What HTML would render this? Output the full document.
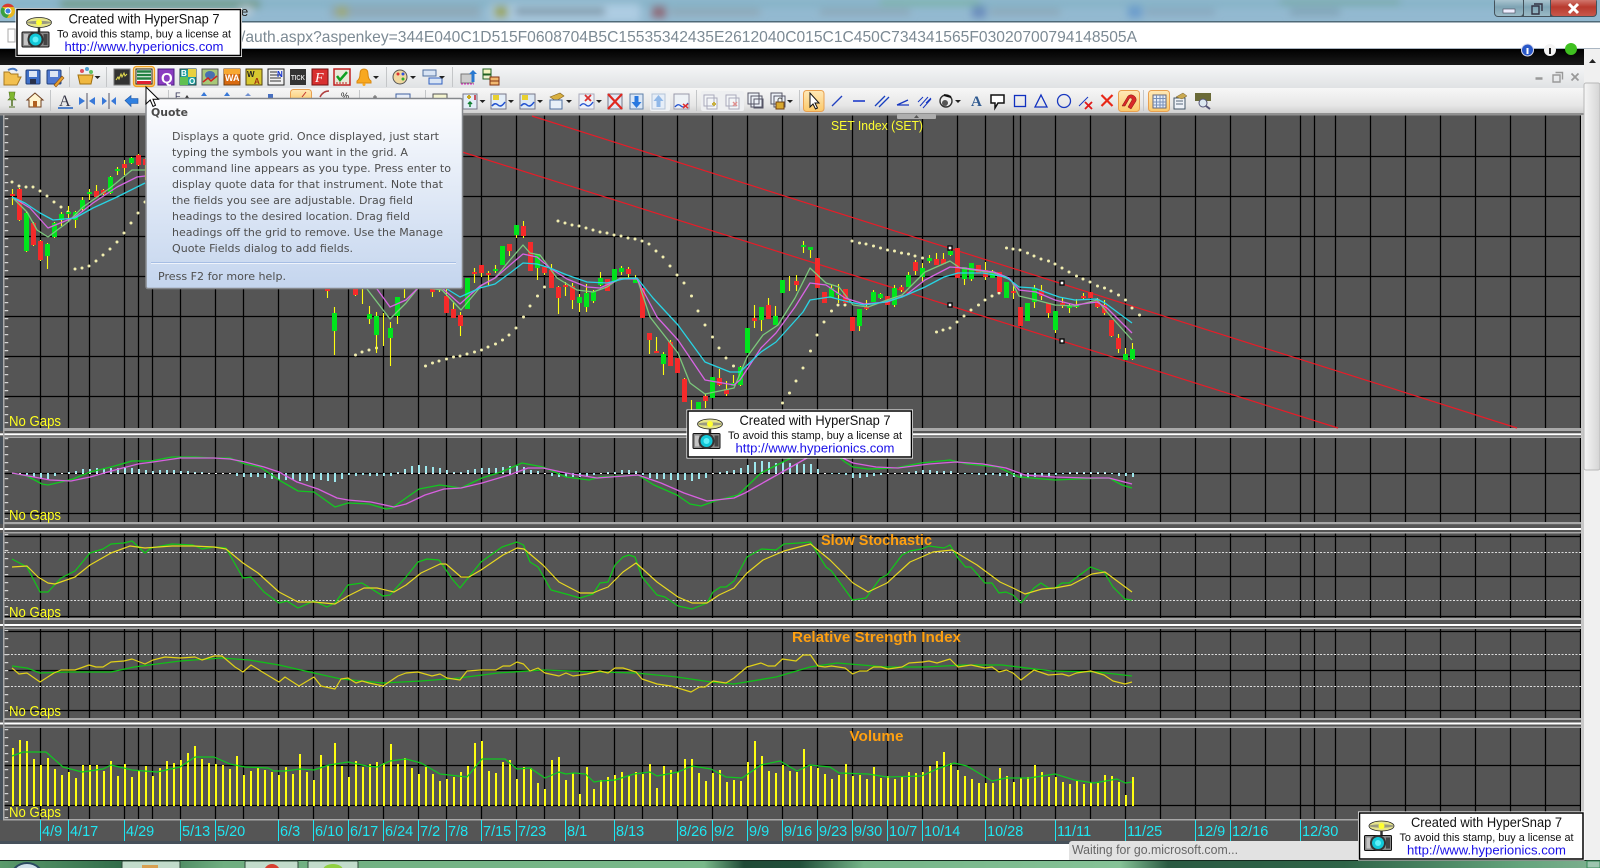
<!DOCTYPE html>
<html><head><meta charset="utf-8"><title>Chart</title>
<style>html,body{margin:0;padding:0;background:#fff;width:1600px;height:868px;overflow:hidden}svg{display:block}
.st{font-family:"Liberation Sans",sans-serif}
.tt{font-family:"DejaVu Sans","Liberation Sans",sans-serif;font-size:11px;fill:#4e4e4e}
.dt{font-family:"Liberation Sans",sans-serif;font-size:14.5px;fill:#1fe6f2}
.ng{font-family:"Liberation Sans",sans-serif;font-size:15px;fill:#ffff20}
.or{font-family:"Liberation Sans",sans-serif;font-size:15px;font-weight:bold;fill:#ffa010;text-anchor:middle}
.ln{fill:none;stroke-linejoin:round}
</style></head><body>
<svg width="1600" height="868" viewBox="0 0 1600 868" xmlns="http://www.w3.org/2000/svg">
<defs>
<filter id="b" x="-5%" y="-50%" width="110%" height="200%"><feGaussianBlur stdDeviation="4"/></filter>
<linearGradient id="tb1" x1="0" y1="0" x2="0" y2="1"><stop offset="0" stop-color="#f5f6f7"/><stop offset="1" stop-color="#e0e2e4"/></linearGradient>
<linearGradient id="tb2" x1="0" y1="0" x2="0" y2="1"><stop offset="0" stop-color="#f7f7f7"/><stop offset=".7" stop-color="#e6e6e6"/><stop offset="1" stop-color="#cfcfcf"/></linearGradient>
<linearGradient id="tip" x1="0" y1="0" x2="0" y2="1"><stop offset="0" stop-color="#fdfdfe"/><stop offset="1" stop-color="#c4d5ee"/></linearGradient>
<linearGradient id="blk" x1="0" y1="0" x2="0" y2="1"><stop offset="0" stop-color="#000"/><stop offset="1" stop-color="#1a1a1a"/></linearGradient>
<linearGradient id="hl" x1="0" y1="0" x2="0" y2="1"><stop offset="0" stop-color="#ffe9b8"/><stop offset="1" stop-color="#fbc96a"/></linearGradient>
<linearGradient id="tbar" x1="0" y1="0" x2="1" y2="0"><stop offset="0" stop-color="#5a9a6b"/><stop offset=".08" stop-color="#2f6a48"/><stop offset=".14" stop-color="#6fae80"/><stop offset=".44" stop-color="#79b98a"/><stop offset=".465" stop-color="#1f4a36"/><stop offset=".5" stop-color="#214f3a"/><stop offset=".54" stop-color="#75b488"/><stop offset=".7" stop-color="#85c296"/><stop offset=".73" stop-color="#2a5a42"/><stop offset=".84" stop-color="#2f6448"/><stop offset=".95" stop-color="#64a47c"/><stop offset="1" stop-color="#7fb090"/></linearGradient>
<linearGradient id="sb" x1="0" y1="0" x2="1" y2="0"><stop offset="0" stop-color="#f6f6f6"/><stop offset="1" stop-color="#d4d4d4"/></linearGradient>
<linearGradient id="cls" x1="0" y1="0" x2="0" y2="1"><stop offset="0" stop-color="#d8877f"/><stop offset=".5" stop-color="#b83a2e"/><stop offset="1" stop-color="#c8584c"/></linearGradient>
<linearGradient id="wc" x1="0" y1="0" x2="0" y2="1"><stop offset="0" stop-color="#b6ced8"/><stop offset=".5" stop-color="#7fa4b4"/><stop offset="1" stop-color="#9bbac6"/></linearGradient>
<g id="cam">
<ellipse cx="23.5" cy="14.5" rx="12.5" ry="5" fill="#e6e48c" stroke="#222" stroke-width=".8"/><ellipse cx="23.5" cy="14.5" rx="12.5" ry="1.6" fill="#9a9a80"/>
<circle cx="23.5" cy="14.5" r="3" fill="#ffff30"/><path d="M23.5 19.5V24" stroke="#333" stroke-width="2.5"/>
<rect x="6.5" y="24" width="27" height="15" rx="1" fill="#8a8a8a" stroke="#111"/><rect x="8.5" y="26" width="4" height="11" fill="#c4c4c4"/><rect x="28" y="26" width="4" height="11" fill="#444"/>
<circle cx="20" cy="31.5" r="8" fill="#333"/><circle cx="20" cy="31.5" r="6" fill="#12c8d8"/><circle cx="20" cy="31.5" r="3" fill="#60f0f8"/>
</g>
<path id="arr" d="M0 0h6l-3 3z" fill="#222"/>
</defs>

<!-- title strip -->
<rect width="1600" height="22" fill="#93b9d0"/>
<g filter="url(#b)">
<rect x="0" y="0" width="1600" height="7" fill="#84b2c6"/>
<rect x="60" y="0" width="200" height="8" fill="#6f9a88"/><rect x="240" y="6" width="12" height="10" fill="#b8cad8"/>
<rect x="330" y="6" width="150" height="11" fill="#8ea9b8"/><rect x="336" y="6" width="12" height="11" fill="#9ca878"/>
<rect x="490" y="4" width="150" height="18" fill="#adcce2"/><rect x="494" y="6" width="14" height="12" fill="#98a458"/><rect x="515" y="8" width="90" height="7" fill="#7c94a4"/>
<rect x="652" y="6" width="14" height="12" fill="#8e6a78"/><rect x="670" y="9" width="90" height="6" fill="#8fa5b2"/>
<rect x="820" y="9" width="90" height="6" fill="#8ca6b6"/><rect x="880" y="0" width="100" height="5" fill="#78b2a0"/>
<rect x="972" y="6" width="14" height="12" fill="#6a8cbc"/><rect x="990" y="9" width="70" height="6" fill="#8ca6b6"/><rect x="1128" y="6" width="14" height="12" fill="#6c9ccc"/><rect x="1145" y="9" width="70" height="6" fill="#88a6bc"/>
<rect x="1290" y="9" width="50" height="6" fill="#80a0b2"/><rect x="1280" y="0" width="120" height="4" fill="#70a498"/>
</g>
<text x="241" y="16" font-family="Liberation Sans,sans-serif" font-size="13" fill="#222">e</text>
<circle cx="8" cy="11" r="7" fill="#e8b820"/><path d="M2 7a7 7 0 0 1 12 0H8z" fill="#d83a30"/><path d="M2 7a7 7 0 0 0 5 11l3-5z" fill="#3aa040"/><circle cx="8" cy="11" r="3" fill="#3a80e0" stroke="#fff"/>
<!-- window controls -->
<rect x="1494" y="-2" width="103" height="19" rx="4" fill="#44525c"/>
<rect x="1495" y="-2" width="28" height="18" rx="3" fill="url(#wc)"/><rect x="1524" y="-2" width="26" height="18" fill="url(#wc)"/><rect x="1551" y="-2" width="45" height="18" rx="3" fill="url(#cls)"/>
<rect x="1503" y="9" width="12" height="4" fill="#eef" stroke="#445" stroke-width=".6"/>
<path d="M1532 6h7v8h-7zM1534 4h8v7" fill="none" stroke="#334" stroke-width="1.4"/>
<path d="M1569 4l9 9M1578 4l-9 9" stroke="#fff" stroke-width="3"/>
<!-- address bar -->
<rect y="21" width="1600" height="1.5" fill="#4f6a78"/><rect y="22.5" width="1600" height="26" fill="#fff"/><rect y="48" width="1600" height="1" fill="#aab6c2"/>
<rect x="8" y="29" width="7" height="13" fill="#fff" stroke="#a8a8a8"/>
<text x="241" y="42" font-family="Liberation Sans,sans-serif" font-size="16" fill="#7c8a94" textLength="896" lengthAdjust="spacingAndGlyphs">/auth.aspx?aspenkey=344E040C1D515F0608704B5C15535342435E2612040C015C1C450C734341565F03020700794148505A</text>
<rect y="49" width="1600" height="16" fill="url(#blk)"/>
<circle cx="1527.5" cy="50" r="6" fill="#2a58c8" stroke="#dde"/><circle cx="1550" cy="50" r="6" fill="#f4f4f4"/><circle cx="1571" cy="49" r="6" fill="#3fc020"/><rect x="1526.5" y="48" width="2" height="6" fill="#fff"/><rect x="1549" y="48" width="2" height="6" fill="#222"/>
<!-- toolbars -->
<rect y="65" width="1584" height="23" fill="url(#tb1)"/><rect y="88" width="1584" height="25" fill="url(#tb2)"/><rect y="113" width="1584" height="2" fill="#8c8c8c"/>
<path d="M69.500 67v20M106.500 67v20M386.500 67v20M452.500 67v20M50.500 90v21M168.500 90v21M359.500 90v21M425.500 90v21M696.500 90v21M799.500 90v21M1143.500 90v21" stroke="#c4c6c8"/>

<!-- row 1 icons -->
<path d="M4 72h5l2 2h7v3h3l-4 8H4z" fill="#f2c050" stroke="#a67820"/><path d="M8 70q6-3 9 1" stroke="#4878c0" fill="none" stroke-width="2"/>
<rect x="26" y="70" width="14" height="14" rx="1" fill="#3f70c8" stroke="#20407c"/><rect x="29" y="71" width="8" height="6" fill="#dde6f4"/><rect x="30" y="79" width="6" height="5" fill="#28304a"/>
<rect x="47" y="70" width="14" height="14" rx="1" fill="#4f78d0" stroke="#20407c"/><rect x="50" y="71" width="8" height="6" fill="#dde6f4"/><path d="M54 85l8-9 2 2-8 9z" fill="#e8a030" stroke="#8a5010" stroke-width=".6"/>
<path d="M78 75h15l-2 9H80z" fill="#f0b840" stroke="#a07010"/><circle cx="82" cy="71" r="2" fill="#e05060"/><circle cx="87" cy="69" r="2" fill="#50a0d0"/><circle cx="91" cy="72" r="2" fill="#60c060"/><use href="#arr" x="94.500" y="76"/>
<rect x="114" y="69" width="16" height="16" fill="#333" stroke="#777"/><path d="M116 80l2-3 1 2 2-5 1 3 2-4 1 3 2-2" stroke="#e8e050" fill="none"/>
<rect x="133.500" y="66.500" width="21" height="20" rx="3" fill="url(#hl)" stroke="#f0a020" stroke-width="1.300"/><rect x="136" y="69" width="16" height="15" fill="#fff" stroke="#222"/><path d="M137 71.500h14M137 75h14M137 78.500h14" stroke="#208040" stroke-width="2.500"/><rect x="137" y="81" width="14" height="3" fill="#e02030"/>
<rect x="158" y="69" width="16" height="16" fill="#8a3cc0" stroke="#4a2080"/><text x="161" y="83" font-family="Liberation Sans,sans-serif" font-weight="bold" font-size="15" fill="#fff">Q</text>
<rect x="180" y="69" width="16" height="16" fill="#20a0a0" stroke="#204040"/><rect x="188" y="69" width="8" height="8" fill="#e8d040"/><rect x="180" y="77" width="8" height="8" fill="#60c050"/><text x="181" y="76" font-family="Liberation Sans,sans-serif" font-size="8" font-weight="bold" fill="#fff">B</text><text x="189" y="84" font-family="Liberation Sans,sans-serif" font-size="8" font-weight="bold" fill="#fff">O</text>
<rect x="202" y="69" width="16" height="16" fill="#a8c878" stroke="#555"/><ellipse cx="210" cy="75" rx="5" ry="4" fill="#4870b0"/><path d="M203 82l5-4 3 3 6-5" stroke="#d02020" fill="none" stroke-width="1.500"/>
<rect x="224" y="69" width="16" height="16" fill="#d86a10" stroke="#704010"/><rect x="224" y="69" width="16" height="5" fill="#f8a830"/><text x="225" y="81" font-family="Liberation Sans,sans-serif" font-size="9" font-weight="bold" fill="#fff">WA</text>
<rect x="246" y="69" width="16" height="16" fill="#d8c830" stroke="#504010"/><text x="247" y="77" font-family="Liberation Sans,sans-serif" font-size="8" font-weight="bold" fill="#222">W</text><text x="254" y="84" font-family="Liberation Sans,sans-serif" font-size="8" font-weight="bold" fill="#a03010">A</text>
<rect x="268" y="69" width="16" height="16" fill="#f0f0f0" stroke="#222"/><path d="M270 72h7M270 75h11M270 78h11M270 81h11" stroke="#333"/><text x="277" y="77" font-family="Liberation Sans,sans-serif" font-size="8" font-weight="bold" fill="#1030d0">N</text>
<rect x="290" y="69" width="16" height="16" fill="#333"/><text x="291" y="80" font-family="Liberation Sans,sans-serif" font-size="7" font-weight="bold" fill="#ddd" textLength="14" lengthAdjust="spacingAndGlyphs">TICK</text>
<rect x="312" y="69" width="16" height="16" fill="#d83030" stroke="#701010"/><text x="315" y="82" font-family="Liberation Serif,serif" font-style="italic" font-size="14" fill="#fff">F</text>
<rect x="334" y="69" width="16" height="16" fill="#e8e8d8" stroke="#c02020" stroke-width="1.500"/><path d="M337 76l3 4 7-8" stroke="#10a020" fill="none" stroke-width="2.500"/><path d="M336 83h12" stroke="#c02020" stroke-dasharray="2 1"/>
<path d="M364 69q4 0 4 5 0 5 3 7v2h-14v-2q3-2 3-7 0-5 4-5z" fill="#f8a820" stroke="#d88810"/><circle cx="364" cy="84.500" r="1.500" fill="#f8a820"/><use href="#arr" x="373" y="76"/>
<ellipse cx="400" cy="77" rx="7" ry="7" fill="#f0d8a0" stroke="#555"/><circle cx="398" cy="74" r="1.500" fill="#e03030"/><circle cx="403" cy="74" r="1.500" fill="#3050e0"/><circle cx="403" cy="79" r="1.500" fill="#30b030"/><use href="#arr" x="410" y="76"/>
<rect x="423" y="70" width="13" height="6" fill="#d8e4f4" stroke="#5070a0"/><rect x="429" y="78" width="13" height="6" fill="#d8e4f4" stroke="#3060c0"/><use href="#arr" x="439" y="76"/>
<rect x="461" y="74" width="12" height="9" fill="#ccc" stroke="#777"/><path d="M461 84h13" stroke="#e020c0" stroke-dasharray="2 1"/><path d="M473 70l-4 4h2.500v8h3v-8h2.500z" fill="#2878d0"/>
<rect x="483" y="69" width="8" height="5" fill="#f4f4c0" stroke="#206020"/><rect x="483" y="75" width="8" height="4" fill="#f0f0d0" stroke="#206020"/><rect x="490" y="77" width="9" height="4" fill="#f0b870" stroke="#803010"/><rect x="490" y="81" width="9" height="4" fill="#f0b870" stroke="#803010"/>
<path d="M1535.500 78.500h7" stroke="#999" stroke-width="2.500"/><path d="M1553 75h7v7h-7zM1555.500 72.500h7v7" fill="none" stroke="#999" stroke-width="1.400"/><path d="M1571.500 73.500l7 7M1578.500 73.500l-7 7" stroke="#999" stroke-width="1.800"/>

<!-- row 2 icons -->
<path d="M9 92h6l-1 6 2 2h-8l2-2z" fill="#80b830" stroke="#507020" stroke-width=".6"/><path d="M12 100v6" stroke="#507020" stroke-width="1.500"/><path d="M9 107h6" stroke="#507020"/>
<path d="M35 93l-8 7h2v7h12v-7h2z" fill="#fff4d0" stroke="#704020"/><rect x="33" y="101" width="4" height="6" fill="#b06020"/>
<text x="59" y="106" font-family="Liberation Serif,serif" font-size="16" fill="#334">A</text><path d="M58 108h15" stroke="#2060c0" stroke-width="1.500"/>
<path d="M87 93v16" stroke="#556" /><path d="M85 101l-6-4v8zM89 101l6-4v8z" fill="#3878d8"/>
<path d="M109 93v16" stroke="#556"/><path d="M102 97l5 4-5 4zM116 97l-5 4 5 4z" fill="#3878d8"/>
<path d="M125 100.500l6-5v3h7v5h-7v3z" fill="#3080e0" stroke="#1850a0" stroke-width=".6"/>
<text x="175" y="99" font-family="Liberation Sans,sans-serif" font-size="9" fill="#335">F</text><path d="M185 98l2-3 2 3z" fill="#333"/><path d="M204 92l3 4h-6z" fill="#3878d8"/><path d="M227 92l3 4h-6z" fill="#3878d8"/><path d="M248 93l3 3h-6z" fill="#7090d0"/><rect x="268" y="94" width="5" height="5" fill="#4870c0"/>
<rect x="290.500" y="89.500" width="21" height="12" rx="3" fill="url(#hl)" stroke="#e8a050"/><path d="M306 92l-4 5" stroke="#c03030"/><path d="M320 97q3-6 9-6" stroke="#b04040" fill="none" stroke-width="1.500"/><text x="341" y="99" font-family="Liberation Sans,sans-serif" font-size="9" fill="#222">%</text><path d="M375 95v3M373 97h4" stroke="#666"/><rect x="396" y="94" width="14" height="6" fill="#e8eef8" stroke="#4060a0"/><rect x="433" y="94" width="14" height="6" fill="#f4f4d0" stroke="#555"/>

<g id="chA"><rect x="463" y="94" width="14" height="15" fill="#e4eef8" stroke="#778"/><path d="M467 97h4M469 95v4" stroke="#c8a820" stroke-width="2"/><path d="M475 95v5" stroke="#c02030" stroke-width="1.500"/><path d="M470 107v-5M468 104l2-2 2 2" stroke="#108030" fill="none" stroke-width="1.500"/></g>
<use href="#arr" x="479.500" y="100"/>
<rect x="491" y="94" width="15" height="15" fill="#e4eef8" stroke="#778"/><path d="M492 106q3-4 6-1t7-3" stroke="#2050d0" fill="none" stroke-width="1.500"/><rect x="493" y="95" width="6" height="5" fill="#e8d030"/><use href="#arr" x="508" y="100"/>
<rect x="520" y="94" width="15" height="15" fill="#dde8f4" stroke="#778"/><path d="M521 106q3-4 6-1t7-3" stroke="#2050d0" fill="none" stroke-width="1.500"/><rect x="522" y="95" width="6" height="5" fill="#e8d030"/><use href="#arr" x="537" y="100"/>
<path d="M550 97l10-4 4 3-8 5z" fill="#d8b040" stroke="#806020" stroke-width=".6"/><rect x="550" y="100" width="12" height="9" fill="#e8f0f8" stroke="#5070a0"/><use href="#arr" x="566" y="100"/>
<rect x="579" y="94" width="15" height="15" fill="#eef2f8" stroke="#aab"/><path d="M585 95l6 6M591 95l-6 6" stroke="#d83030" stroke-width="1.800"/><path d="M580 106q3-4 6-1t7-3" stroke="#2050d0" fill="none" stroke-width="1.300"/><use href="#arr" x="596" y="100"/>
<rect x="608" y="94" width="14" height="15" fill="#e0e8f4" stroke="#778"/><path d="M608 94l14 15M622 94l-14 15" stroke="#e02820" stroke-width="2.200"/>
<rect x="630" y="94" width="13" height="15" fill="#dbe7f6" stroke="#6080a8"/><path d="M636.500 108l5-6h-3v-6h-4v6h-3z" fill="#2878e0"/>
<rect x="650" y="91" width="20" height="20" rx="2" fill="#f0f2f4"/><rect x="652" y="94" width="13" height="15" fill="#e6eef8" stroke="#b4c4d8"/><path d="M658.500 95l5 6h-3v6h-4v-6h-3z" fill="#90b8e8"/>
<rect x="674" y="94" width="15" height="15" fill="#eef2f6" stroke="#99a"/><path d="M675 107q3-4 6-1t7-3" stroke="#2050d0" fill="none" stroke-width="1.300"/><path d="M683 104l5 4M688 104l-5 4" stroke="#e03030" stroke-width="1.500"/>
<rect x="701" y="91" width="43" height="20" rx="2" fill="#eeeff1"/><path d="M704 95h10v11h-10zM707 98h10v11h-10z" fill="#f4f6f8" stroke="#aab"/><path d="M712 104h4M714 102v4" stroke="#c8b040" stroke-width="2"/><path d="M726 95h10v11h-10zM729 98h10v11h-10z" fill="#f4f6f8" stroke="#aab"/><path d="M733 102l4 4M737 102l-4 4" stroke="#e09090" stroke-width="1.500"/>
<path d="M748 93h11v11h-11zM751 96h11v11h-11zM754 99h9v9h-9z" fill="#eef2f8" stroke="#556"/>
<path d="M771 93h11v11h-11zM774 96h11v11h-11z" fill="#eef2f8" stroke="#556"/><rect x="776" y="102" width="8" height="7" fill="#d8a830" stroke="#704010"/><path d="M778 102v-2a2 2 0 0 1 4 0v2" fill="none" stroke="#555"/><use href="#arr" x="787" y="100"/>
<rect x="803.500" y="90.500" width="20.500" height="21" rx="3" fill="url(#hl)" stroke="#e8a050"/><path d="M810 93v14l3-3 2.500 5 2-1-2.500-5h4z" fill="#fff" stroke="#111"/>
<path d="M832 106l10-10" stroke="#2040c0" stroke-width="1.300"/><path d="M853 101h12" stroke="#1030c8" stroke-width="1.500"/>
<path d="M875 106l10-10M879 107l10-10" stroke="#1840c0" stroke-width="1.300"/><path d="M897 105h12M897 105l11-5" stroke="#1838c0" stroke-width="1.300"/><path d="M920 106l8-9M923 108l8-9M926 103l5-5M918 102l5-5" stroke="#1838c0"/>
<circle cx="946" cy="101" r="6" fill="#eee" stroke="#333" stroke-width="1.400"/><circle cx="945" cy="103" r="3" fill="#555"/><path d="M944 95l7 2" stroke="#111" stroke-width="2"/><use href="#arr" x="955" y="100"/>
<text x="971" y="106" font-family="Liberation Serif,serif" font-weight="bold" font-size="15" fill="#2f5a90">A</text>
<path d="M991 95h13v8h-6l-3 5v-5h-4z" fill="#fff" stroke="#111" stroke-width="1.500"/>
<rect x="1014.500" y="95.500" width="11" height="11" fill="none" stroke="#1030c0" stroke-width="1.300"/><path d="M1041 95l6 12h-12z" fill="none" stroke="#1030c0" stroke-width="1.300"/><circle cx="1064" cy="101" r="6.500" fill="none" stroke="#1838c0" stroke-width="1.300"/>
<path d="M1079 106l9-9" stroke="#1838c0"/><path d="M1085 102l7 7M1092 102l-7 7" stroke="#e01818" stroke-width="1.800"/><path d="M1101.500 95l11 11M1112.500 95l-11 11" stroke="#e82818" stroke-width="2.200"/>
<rect x="1118.500" y="90.500" width="21" height="21" rx="3" fill="url(#hl)" stroke="#e8a050"/><path d="M1122 106l6-10a5 5 0 0 1 8 5l-5 8-3-2 4-7a1.500 1.500 0 0 0-3-1l-4 7z" fill="#d82828" stroke="#801010" stroke-width=".5"/>
<rect x="1148.500" y="90.500" width="21" height="21" rx="3" fill="url(#hl)" stroke="#e8a050"/><rect x="1153" y="95" width="13" height="13" fill="#e4ecf8" stroke="#667"/><path d="M1156.500 95v13M1160 95v13M1163 95v13M1153 98.500h13M1153 102h13M1153 105h13" stroke="#7890b8"/>
<rect x="1174" y="98" width="11" height="11" fill="#eef2f8" stroke="#456"/><path d="M1176 101h7M1176 104h7" stroke="#567"/><path d="M1176 97l7-4 4 3-5 3z" fill="#c8a850" stroke="#776030" stroke-width=".5"/>
<rect x="1195" y="93" width="16" height="8" fill="#6a6a38"/><circle cx="1203" cy="103" r="4" fill="#dde8f0" stroke="#557"/><path d="M1206 106l4 3" stroke="#557" stroke-width="2"/>

<!-- chart area -->
<rect x="0" y="115" width="1584" height="729" fill="#555"/>
<rect x="0" y="115" width="3" height="729" fill="#46505a"/>
<!-- vertical grid -->
<path d="M40.500 115V820M68.500 115V820M89.500 115V820M124.500 115V820M138.500 115V820M152.500 115V820M180.500 115V820M215.500 115V820M243.500 115V820M278.500 115V820M313.500 115V820M348.500 115V820M383.500 115V820M418.500 115V820M446.500 115V820M481.500 115V820M516.500 115V820M544.500 115V820M579.500 115V820M614.500 115V820M642.500 115V820M677.500 115V820M712.500 115V820M747.500 115V820M782.500 115V820M817.500 115V820M852.500 115V820M887.500 115V820M922.500 115V820M957.500 115V820M985.500 115V820M1013.500 115V820M1020.500 115V820M1055.500 115V820M1090.500 115V820M1125.500 115V820M1160.500 115V820M1195.500 115V820M1230.500 115V820M1265.500 115V820M1300.500 115V820M1314.500 115V820M1335.500 115V820M1370.500 115V820M1405.500 115V820M1440.500 115V820M1475.500 115V820M1510.500 115V820M1545.500 115V820M1580.500 115V820" stroke="#000" stroke-width="1.250"/>
<!-- horizontal grid -->
<path d="M4 156.500H1581M4 196.500H1581M4 236.500H1581M4 276.500H1581M4 316.500H1581M4 356.500H1581M4 396.500H1581M4 473.500H1581M4 513.500H1581M4 536.500H1581M4 576.500H1581M4 616.500H1581M4 631.500H1581M4 670.500H1581M4 710.500H1581M4 765.500H1581M4 805.500H1581" stroke="#000" stroke-width="1.250"/>
<path d="M4 552.500H1581M4 600.500H1581M4 654.500H1581M4 686.500H1581" stroke="#dcdcdc" stroke-width="1" stroke-dasharray="2 1.500"/>
<!-- bands -->
<g fill="#555"><rect y="431" width="1584" height="6"/><rect y="524" width="1584" height="9"/><rect y="620" width="1584" height="9"/><rect y="720" width="1584" height="8"/><rect y="820" width="1584" height="24"/></g>
<g fill="#a8a8a8"><rect x="3" y="428" width="1581" height="3"/><rect x="3" y="436.500" width="1581" height="1.500"/><rect x="3" y="522" width="1581" height="2.200"/><rect x="3" y="532" width="1581" height="1.500"/><rect x="3" y="618" width="1581" height="2"/><rect x="3" y="627.500" width="1581" height="1.500"/><rect x="3" y="718" width="1581" height="2"/><rect x="3" y="726.500" width="1581" height="1.500"/><rect x="3" y="819" width="1581" height="1.500"/><rect x="0" y="841" width="1584" height="3" fill="#46505a"/></g>
<g fill="#fff"><rect y="433.300" width="1584" height="2"/><rect y="528" width="1584" height="2"/><rect y="624" width="1584" height="2"/><rect y="722.500" width="1584" height="2"/></g>
<rect x="0" y="113" width="1584" height="2.500" fill="#909090"/><rect x="3" y="115" width="1.500" height="705" fill="#a8a8a8"/><rect x="1581" y="115" width="3" height="705" fill="#c8c8c8"/>
<path d="M6.500 118V428M6.500 438V522M6.500 534V618M6.500 630V718M6.500 729V819" stroke="#d4d4d4" stroke-width="3.500" stroke-dasharray="1.300 6.700"/>
<rect x="897" y="114" width="39" height="5" rx="1" fill="#aeaeae"/><path d="M914 118l2.500-3 2.500 3z" fill="#555"/>
<text x="831" y="130" font-family="Liberation Sans,sans-serif" font-size="13" fill="#ffff30" textLength="92" lengthAdjust="spacingAndGlyphs">SET Index (SET)</text>

<!-- trend lines -->
<path d="M532 116L1517 428M440 145L1338 428" stroke="#e81c28" stroke-width="1.200" fill="none"/>
<!-- SAR -->
<path d="M12 182h.01M19 186h.01M26 187h.01M33 187h.01M40 191h.01M47 196h.01M54 202h.01M61 207h.01M68 212h.01M75 269h.01M82 268h.01M89 266h.01M96 261h.01M103 255h.01M110 249h.01M117 242h.01M124 233h.01M131 223h.01M138 213h.01M145 202h.01M355.500 355h.01M362 352h.01M369 350h.01M376.500 348h.01M425.500 366h.01M432.500 363h.01M439 361h.01M446.500 359h.01M453.500 357h.01M460 356h.01M467 354h.01M474.500 352h.01M481.500 350h.01M488 347h.01M495.500 344h.01M502.500 340h.01M509 335h.01M516 328h.01M523.500 317h.01M530 306h.01M537.500 296h.01M544.500 287h.01M551 280h.01M558 221h.01M565 223h.01M572 225h.01M579 226h.01M586 228h.01M593 230h.01M600 232h.01M607 233h.01M614 235h.01M621 236h.01M628 238h.01M635 239h.01M642 241h.01M649 244h.01M656 251h.01M663 257h.01M670 266h.01M677 275h.01M684 283h.01M691.500 296h.01M698 311h.01M705 325h.01M712.500 337h.01M719 348h.01M726 358h.01M733.500 366h.01M740 373h.01M782.500 403h.01M789.500 393h.01M796 381h.01M803 368h.01M810.500 351h.01M817 335h.01M824 322h.01M831.500 311h.01M838 305h.01M845 305h.01M852 241h.01M859.500 243h.01M866 244h.01M873.500 246h.01M880.500 248h.01M887.500 250h.01M894.500 251h.01M901.500 253h.01M908.500 254h.01M915 256h.01M922.500 258h.01M936.500 332h.01M943 330h.01M950 328h.01M957 322h.01M964 316h.01M971 310h.01M978.500 305h.01M985 300h.01M992 296h.01M999 293h.01M1006.500 248h.01M1013 249h.01M1020 250h.01M1027.500 253h.01M1034 256h.01M1041 259h.01M1048.500 261h.01M1055 264h.01M1062 268h.01M1069 272h.01M1076.500 276h.01M1083 279h.01M1090 282h.01M1097.500 286h.01M1104.500 288h.01M1111 291h.01M1118.500 295h.01M1125.500 300h.01M1132 308h.01M1139.500 315h.01" stroke="#f2eeb0" stroke-width="3" stroke-linecap="round"/>
<!-- wicks -->
<path d="M12.500 189V205M19.500 188V221M26.500 212V252M33.500 222V246M40.500 240V261M47.500 243V269M54.500 222V238M61.500 212V226M68.500 206V222M75.500 211V228M82.500 197V212M89.500 189V200M96.500 185V198M103.500 189V195M110.500 176V194M117.500 167V175M124.500 160V175M131.500 157V164M138.500 154V166M145.500 158V180M327.500 288V298M334.500 307V355M355.500 288V296M362.500 289V304M369.500 306V324M376.500 312V353M383.500 313V346M390.500 322V366M397.500 297V324M404.500 287V298M432.500 288V297M439.500 288V292M446.500 288V313M453.500 302V318M460.500 312V336M467.500 278V309M474.500 268V283M481.500 265V277M488.500 271V285M495.500 265V273M502.500 246V265M509.500 244V256M516.500 225V238M523.500 221V238M530.500 242V271M537.500 254V280M544.500 267V275M551.500 264V288M558.500 286V314M565.500 282V296M572.500 283V309M579.500 294V312M586.500 284V312M593.500 290V303M600.500 272V286M607.500 279V291M614.500 269V282M621.500 266V275M628.500 267V278M635.500 275V283M642.500 288V318M649.500 333V354M656.500 337V353M663.500 352V375M670.500 340V366M677.500 358V373M684.500 378V402M691.500 400V410M698.500 402V409M705.500 394V408M712.500 377V398M719.500 369V386M726.500 381V396M733.500 375V386M740.500 366V386M747.500 328V353M754.500 305V328M761.500 307V331M768.500 298V319M775.500 306V325M782.500 280V293M789.500 276V291M796.500 275V291M803.500 241V253M810.500 247V258M817.500 258V288M824.500 292V303M831.500 285V298M838.500 284V303M845.500 289V303M852.500 317V331M859.500 309V331M866.500 300V310M873.500 290V302M880.500 293V299M887.500 296V305M894.500 285V307M901.500 285V292M908.500 272V287M915.500 260V275M922.500 263V282M929.500 255V263M936.500 253V265M943.500 253V264M950.500 247V256M957.500 248V278M964.500 267V285M971.500 263V281M978.500 265V273M985.500 262V280M992.500 270V278M999.500 272V292M1006.500 282V298M1013.500 283V299M1020.500 307V326M1027.500 303V321M1034.500 285V308M1041.500 285V300M1048.500 303V318M1055.500 311V333M1062.500 298V308M1069.500 304V313M1076.500 299V308M1083.500 293V299M1090.500 292V298M1097.500 298V308M1104.500 300V315M1111.500 320V337M1118.500 334V353M1125.500 348V360M1132.500 343V360" stroke="#ffff10" stroke-width="1.100"/>
<!-- red bodies -->
<path d="M12.500 194V196M19.500 189V220M33.500 223V245M40.500 241V260M96.500 191V197M103.500 190V194M124.500 164V168M138.500 155V165M145.500 159V165M327.500 289V291M355.500 288V295M432.500 289V292M446.500 296V313M453.500 309V318M460.500 315V326M474.500 272V274M481.500 265V273M488.500 273V275M509.500 244V251M523.500 226V236M530.500 242V271M544.500 267V273M551.500 270V288M558.500 287V298M565.500 285V287M572.500 286V300M607.500 279V291M628.500 269V274M642.500 288V318M649.500 333V340M656.500 351V353M670.500 342V366M677.500 358V373M684.500 379V402M705.500 396V401M719.500 378V385M726.500 389V394M754.500 318V321M768.500 305V319M796.500 281V285M817.500 258V288M824.500 292V303M845.500 289V303M852.500 317V331M866.500 307V309M887.500 296V305M901.500 287V290M915.500 262V271M936.500 259V265M943.500 259V264M957.500 248V278M978.500 265V273M985.500 270V277M999.500 272V292M1013.500 291V293M1020.500 307V326M1041.500 290V296M1048.500 303V313M1062.500 303V305M1083.500 296V298M1090.500 292V298M1097.500 299V307M1104.500 305V313M1111.500 320V336M1118.500 338V349" stroke="#f52a2a" stroke-width="5"/>
<!-- green bodies -->
<path d="M26.500 213V251M47.500 244V256M54.500 223V237M61.500 214V220M68.500 212V214M75.500 212V220M82.500 200V209M89.500 192V194M110.500 177V193M117.500 169V171M131.500 158V163M334.500 313V331M369.500 314V319M376.500 316V335M390.500 328V338M397.500 297V316M467.500 278V309M495.500 269V271M502.500 246V265M516.500 225V235M537.500 254V268M579.500 297V303M586.500 293V307M593.500 292V301M600.500 278V285M614.500 269V282M621.500 268V272M635.500 278V283M663.500 354V364M698.500 402V409M712.500 377V398M733.500 383V386M740.500 367V385M747.500 328V353M761.500 307V320M775.500 316V325M782.500 280V293M803.500 245V247M810.500 247V250M831.500 288V298M838.500 293V295M859.500 309V326M873.500 292V302M880.500 294V298M894.500 288V305M908.500 275V287M922.500 268V277M929.500 258V261M950.500 251V255M964.500 267V279M971.500 263V279M992.500 272V278M1006.500 282V298M1027.500 303V321M1034.500 288V302M1055.500 311V330M1069.500 306V308M1076.500 305V307" stroke="#00e41c" stroke-width="5"/>
<path d="M1125.500 354V360M1132.500 349V359" stroke="#00e41c" stroke-width="5"/>
<!-- MAs -->
<path class="ln" stroke="#7cc87c" stroke-width="1.300" d="M12 197L27 212L37 230L48 237L68 222L83 207L110 188L132 170L145 170M367 289L390 319L406 303L419 287L442 290L461 310L482 285L495 278L510 260L523 245L530 253L540 255L557 278L577 290L593 292L607 287L620 278L637 278L650 317L678 353L690 383L705 394L734 388L747 357L763 335L778 325L795 298L810 268L826 283L839 287L853 305L868 307L887 300L902 295L925 272L950 261L960 268L994 273L1011 280L1019 296L1036 300L1055 305L1075 306L1097 300L1107 312L1132 340"/>
<path class="ln" stroke="#d864e4" stroke-width="1.300" d="M12 197L30 208L48 228L75 217L93 203L117 187L137 177L145 176M377 289L390 307L406 300L419 287L442 288L460 304L480 286L495 278L510 265L523 254L537 257L550 268L567 279L587 287L600 288L620 279L637 279L657 317L678 340L705 380L734 385L740 380L761 348L776 333L795 307L810 283L826 285L845 298L864 304L887 302L906 295L925 280L950 267L964 268L994 272L1009 278L1019 290L1036 292L1055 300L1075 305L1097 302L1107 308L1132 333"/>
<path class="ln" stroke="#28d4e4" stroke-width="1.300" d="M12 197L25 203L40 213L53 220L75 218L93 208L117 197L137 187L145 183M447 289L460 297L480 288L495 284L510 273L523 263L537 264L550 268L567 275L587 282L607 283L623 279L637 278L653 298L678 325L705 362L730 372L740 372L761 352L776 342L803 312L810 300L830 297L849 302L864 305L885 302L902 297L925 287L944 277L958 273L983 273L1006 277L1019 287L1034 288L1059 297L1075 300L1097 299L1105 303L1132 323"/>
<!-- handles -->
<g fill="#fff" stroke="#000" stroke-width="1.300"><rect x="948" y="246" width="4" height="4"/><rect x="1060" y="281" width="4" height="4"/><rect x="948" y="303" width="4" height="4"/><rect x="1060" y="339" width="4" height="4"/></g>

<!-- MACD -->
<path d="M12 473.500H1133" stroke="#f0f0f0" stroke-dasharray="2 5"/>
<path stroke="#9ee8ee" stroke-width="2" d="M27 473v2M34 473v4M41 473v6M48 473v6M55 473v3M69 473v-1M76 473v-2M83 473v-4M90 473v-4M97 473v-5M104 473v-5M111 473v-5M118 473v-5M125 473v-5M132 473v-5M139 473v-4M146 473v-3M153 473v-2M160 473v-3M167 473v-3M174 473v-3M181 473v-2M188 473v-2M195 473v-1M202 473v-1M237 473v3M244 473v4M251 473v4M258 473v4M265 473v5M272 473v6M279 473v7M286 473v7M293 473v7M300 473v8M307 473v8M314 473v6M321 473v7M328 473v8M335 473v9M342 473v6M349 473v2M356 473v3M363 473v2M370 473v3M377 473v3M384 473v3M391 473v3M398 473v-1M405 473v-4M412 473v-7M419 473v-8M426 473v-7M433 473v-6M440 473v-5M447 473v-3M454 473v-1M461 473v-1M468 473v-3M475 473v-4M482 473v-5M489 473v-5M496 473v-5M503 473v-6M510 473v-7M517 473v-7M524 473v-6M531 473v-3M538 473v-2M552 473v3M559 473v4M566 473v4M573 473v4M580 473v4M587 473v4M594 473v2M608 473v-1M615 473v-1M622 473v-3M629 473v-3M636 473v-2M643 473v2M650 473v5M657 473v6M664 473v6M671 473v7M678 473v7M685 473v7M692 473v8M699 473v6M706 473v5M720 473v-1M727 473v-2M734 473v-3M741 473v-5M748 473v-8M755 473v-11M762 473v-12M769 473v-11M776 473v-10M783 473v-11M790 473v-10M797 473v-9M804 473v-9M811 473v-9M818 473v-4M832 473v1M839 473v1M846 473v2M853 473v5M860 473v5M867 473v4M874 473v3M881 473v2M909 473v-1M916 473v-2M923 473v-3M930 473v-3M937 473v-2M944 473v-2M951 473v-2M965 473v1M972 473v1M979 473v2M986 473v2M993 473v2M1000 473v3M1007 473v3M1014 473v4M1021 473v5M1028 473v5M1035 473v4M1042 473v3M1049 473v3M1056 473v2M1063 473v1M1070 473v-1M1077 473v-1M1084 473v-1M1091 473v-1M1098 473v-1M1105 473v-1M1112 473v1M1119 473v3M1126 473v3M1133 473v4"/>
<path class="ln" stroke="#12c820" stroke-width="1.300" d="M12 473L27 476L42 484L48 485L61 482L73 479L90 472L111 467L132 461L151 461L172 457L195 457L214 458L230 458L245 464L260 467L279 480L298 491L314 492L335 507L348 503L369 504L386 509L392 508L406 498L419 489L440 485L461 488L482 478L501 472L522 463L543 467L566 477L589 480L600 477L638 475L654 485L677 495L690 504L701 506L715 501L738 495L761 473L791 458L810 450L830 450L845 462L853 467L868 469L895 468L921 463L950 460L967 464L998 467L1019 477L1055 480L1078 479L1109 478L1122 485L1132 488"/>
<path class="ln" stroke="#d860e0" stroke-width="1.300" d="M12 473L34 477L50 480L71 481L90 477L115 470L138 464L153 462L180 458L214 458L230 459L245 462L264 467L279 472L297 482L318 489L337 498L348 500L371 502L394 507L406 504L425 495L444 489L461 488L482 483L509 475L528 468L543 468L566 473L597 478L638 475L661 483L684 493L707 501L734 498L745 493L768 480L807 458L830 452L853 463L876 467L898 468L929 464L956 462L983 464L1006 468L1025 475L1055 477L1086 478L1109 478L1132 484"/>
<!-- Stoch -->
<path class="ln" stroke="#10c818" stroke-width="1.200" d="M12 559L27 567L40 592L48 592L61 578L75 571L90 553L103 549L111 544L124 543L132 541L145 553L151 548L172 544L193 545L202 549L214 547L226 548L243 578L251 577L264 592L279 603L287 601L298 608L314 601L327 607L335 603L348 585L362 583L383 596L390 595L406 577L418 562L427 559L439 560L453 580L460 588L481 562L502 547L517 542L523.500 545L530 562L538 567L551 590L566 594L580 598L593 594L600 583L608 582L615 565L623 557L629 555L635 557L642 577L657 595L665 597L678 606L692 609L707 603L713 592L720.500 587L726 587L734 581L747 557L761.500 549L776 550L784 544L799 543L810.500 542L826 567L831.500 571L852.600 600L866 598L880.500 578L887 575L902 555L910 551L921.500 549L929 546L944 548L950 545L958 558L965.500 567L971 567L985 583L992 583L999 593L1006 592L1013 595L1021 603L1034 588L1041 583L1048.500 588L1055 588L1062 583L1069 583L1090.600 567L1104 572L1113 587L1125 599L1132 600"/>
<path class="ln" stroke="#e8d820" stroke-width="1.200" d="M12 567L27 566L38 577L48 583L55 584L75 577L90 565L111 553L130 546L145 548L172 546L193 546L214 547L226 549L243 563L258 573L279 592L298 602L314 602L335 604L348 596L364 588L377 588L394 592L406 585L421 573L440 564L446 564L461 577L469 577L481 570L503 555L517 548L524 549L543 565L559 582L580 593L593 593L600 590L608 587L623 572L636 563L657 582L678 597L692 603L707 603L719 595L734 588L747 573L763 560L784 551L810.500 544L830 560L853 583L868 592L887 583L910 562L933 552L952 550L977 565L1000 582L1013 588L1025 594L1042 589L1055 588L1071 585L1092 574L1105 572L1132 592"/>
<!-- RSI -->
<path class="ln" stroke="#10c018" stroke-width="1.300" d="M12 666L27 668L40 673L69 672L111 672L134 667L180 661L222 658L249 660L279 665L314 673L341 679L383 683L421 681L459 678L498 673L543 670L600 672L636 673L677 677L711 682L734 684L776 677L810 667L837 663L887 667L925 667L964 665L1002 665L1052 671L1097.500 672L1132 676"/>
<path class="ln" stroke="#e0d018" stroke-width="1.200" d="M12 668L19 674L27 673L40 682L54 673L61 670L75 670L89 665L96 667L103 667L111 662L124 661L132 659L145 664L153 660L165 657L180 658L195 657L202 660L214 656L222 656L235 667L243 672L251 665L264 673L279 682L285 677L299 686L314 677L321 686L335 689L341 679L348 678L356 683L362 681L369 683L383 686L398 676L406 673L418 672L432 676L440 674L447 678L460 680L467 671L481 670L496 670L503 666L510 666L517 662L523.500 664L530 671L538 668L545 673L559 676L566 673L573 676L587 674L600 671L608 673L615 668L623 668L636 672L642 679L657 684L671 686L678 688L691 692L699.500 687L705 687L713 681L726 683L734 678L747 667L761 663L768 666L775 666L782.500 659L796 661L803 655L810.500 655L818 666L825 667L831.500 666L845 668L852.600 674L859.500 671L867 671L873.600 667L881 667L888 669L902 667L909 663L922.600 662L929 661L937 663L950 659L958 667L971 665L985 668L992 667L999 672L1006.400 670L1013 673L1021 680L1034 670L1048.500 675L1062 674L1069 676L1076.500 673L1090.600 671L1104 675L1113 681L1125 684L1132 682"/>
<!-- Volume -->
<path stroke="#ffff10" stroke-width="2" d="M13 748V806M20 740V806M27 741V806M34 759V806M41 765V806M48 758V806M55 769V806M62 775V806M69 772V806M76 778V806M83 765V806M90 765V806M97 765V806M104 771V806M111 761V806M118 776V806M125 764V806M132 777V806M139 771V806M146 766V806M153 776V806M160 768V806M167 761V806M174 763V806M181 760V806M188 753V806M195 746V806M202 759V806M209 763V806M216 764V806M223 765V806M230 769V806M237 756V806M244 775V806M251 771V806M258 767V806M265 770V806M272 772V806M279 775V806M286 767V806M293 774V806M300 754V806M307 772V806M314 780V806M321 755V806M328 766V806M335 743V806M342 766V806M349 777V806M356 761V806M363 767V806M370 764V806M377 762V806M384 763V806M391 744V806M398 764V806M405 758V806M412 768V806M419 774V806M426 767V806M433 774V806M440 781V806M447 779V806M454 777V806M461 772V806M468 766V806M475 743V806M482 741V806M489 771V806M496 773V806M503 762V806M510 760V806M517 779V806M524 767V806M531 768V806M538 783V806M545 789V806M552 760V806M559 757V806M566 780V806M573 773V806M580 794V806M587 767V806M594 789V806M601 780V806M608 777V806M615 775V806M622 772V806M629 775V806M636 772V806M643 774V806M650 764V806M657 788V806M664 766V806M671 770V806M678 772V806M685 759V806M692 759V806M699 773V806M706 781V806M713 773V806M720 770V806M727 782V806M734 780V806M741 781V806M748 762V806M755 741V806M762 756V806M769 771V806M776 773V806M783 765V806M790 771V806M797 772V806M804 749V806M811 766V806M818 768V806M825 774V806M832 779V806M839 775V806M846 764V806M853 776V806M860 775V806M867 779V806M874 767V806M881 778V806M888 776V806M895 779V806M902 777V806M909 772V806M916 773V806M923 772V806M930 766V806M937 761V806M944 752V806M951 763V806M958 770V806M965 776V806M972 779V806M979 783V806M986 783V806M993 783V806M1000 768V806M1007 776V806M1014 782V806M1021 778V806M1028 777V806M1035 765V806M1042 772V806M1049 777V806M1056 777V806M1063 782V806M1070 784V806M1077 781V806M1084 784V806M1091 782V806M1098 783V806M1105 775V806M1112 776V806M1119 782V806M1126 795V806M1133 777V806"/>
<path class="ln" stroke="#10c820" stroke-width="1.200" d="M12 756L23 752L46 752L63 767L82 772L103 769L111 765L132 770L157 772L180 767L195 757L214 757L230 764L245 767L268 768L274 771L285 771L300 769L314 770L329 765L348 762L367 766L377 767L390 761L406 759L421 763L440 774L467 777L482 759L505 759L517 769L530 768L545 778L559 772L566 774L574 773L585.500 774L594 782L600 781L615 780L634 774L650 772L657 776L678 772L692 766L711 769L726 777L742 778L761 765L780 761L797 771L810 765L830 767L839 773L868 774L887 777L921.500 776L937 769L954 763L967 766L992 781L1006 778L1029 778L1055 774L1074.500 780L1094 783L1117 779L1125.400 783L1132 782"/>

<!-- titles -->
<text class="or" x="876.500" y="545" textLength="111" lengthAdjust="spacingAndGlyphs">Slow Stochastic</text>
<text class="or" x="876.500" y="642" textLength="169" lengthAdjust="spacingAndGlyphs">Relative Strength Index</text>
<text class="or" x="876.500" y="741" textLength="54" lengthAdjust="spacingAndGlyphs">Volume</text>
<text class="ng" x="9" y="426" textLength="52" lengthAdjust="spacingAndGlyphs">No Gaps</text>
<text class="ng" x="9" y="520" textLength="52" lengthAdjust="spacingAndGlyphs">No Gaps</text>
<text class="ng" x="9" y="617" textLength="52" lengthAdjust="spacingAndGlyphs">No Gaps</text>
<text class="ng" x="9" y="716" textLength="52" lengthAdjust="spacingAndGlyphs">No Gaps</text>
<text class="ng" x="9" y="817" textLength="52" lengthAdjust="spacingAndGlyphs">No Gaps</text>

<!-- date axis -->
<path d="M40.500 820V841M68.500 820V841M124.500 820V841M180.500 820V841M215.500 820V841M278.500 820V841M313.500 820V841M348.500 820V841M383.500 820V841M418.500 820V841M446.500 820V841M481.500 820V841M516.500 820V841M565.500 820V841M614.500 820V841M677.500 820V841M712.500 820V841M747.500 820V841M782.500 820V841M817.500 820V841M852.500 820V841M887.500 820V841M922.500 820V841M985.500 820V841M1055.500 820V841M1125.500 820V841M1195.500 820V841M1230.500 820V841M1300.500 820V841" stroke="#1fe6f2"/>
<g class="dt"><text x="42" y="836">4/9</text><text x="70" y="836">4/17</text><text x="126" y="836">4/29</text><text x="182" y="836">5/13</text><text x="217" y="836">5/20</text><text x="280" y="836">6/3</text><text x="315" y="836">6/10</text><text x="350" y="836">6/17</text><text x="385" y="836">6/24</text><text x="420" y="836">7/2</text><text x="448" y="836">7/8</text><text x="483" y="836">7/15</text><text x="518" y="836">7/23</text><text x="567" y="836">8/1</text><text x="616" y="836">8/13</text><text x="679" y="836">8/26</text><text x="714" y="836">9/2</text><text x="749" y="836">9/9</text><text x="784" y="836">9/16</text><text x="819" y="836">9/23</text><text x="854" y="836">9/30</text><text x="889" y="836">10/7</text><text x="924" y="836">10/14</text><text x="987" y="836">10/28</text><text x="1057" y="836">11/11</text><text x="1127" y="836">11/25</text><text x="1197" y="836">12/9</text><text x="1232" y="836">12/16</text><text x="1302" y="836">12/30</text></g>

<!-- scrollbar -->
<rect x="1584" y="49" width="16" height="811" fill="#f0f0f0"/><rect x="1584" y="83" width="16" height="387" rx="2" fill="url(#sb)" stroke="#b8b8b8"/><path d="M1589 63l3.500-4 3.500 4z" fill="#222"/>
<!-- below -->
<rect x="0" y="844" width="1584" height="16" fill="#fff"/>
<path d="M1069 860V844a3 3 0 0 1 3-3H1360V860z" fill="#e2e2e2"/>
<text x="1072" y="854" font-family="Liberation Sans,sans-serif" font-size="12.500" fill="#666" textLength="166" lengthAdjust="spacingAndGlyphs">Waiting for go.microsoft.com...</text>
<!-- taskbar -->
<rect y="860" width="1600" height="8" fill="url(#tbar)"/><rect y="860" width="1600" height="1" fill="#14281e"/>
<circle cx="27" cy="880" r="17" fill="#cfe0ea" stroke="#2a4a60" stroke-width="2"/>
<g fill="#c2dccb" stroke="#2e4a3a"><rect x="122" y="861" width="58" height="9" rx="1"/><rect x="245" y="861" width="53" height="9" rx="1"/><rect x="308" y="861" width="50" height="9" rx="1"/></g>
<circle cx="272" cy="872" r="8" fill="#d84030"/><ellipse cx="333" cy="870" rx="10" ry="6" fill="#90d040"/><rect x="142" y="865" width="16" height="4" fill="#d8a050"/>
<rect x="1587" y="861" width="13" height="7" fill="#9cc4ae" stroke="#385"/>

<!-- tooltip -->
<rect x="146" y="98.500" width="316.500" height="190" rx="2" fill="url(#tip)" stroke="#85888c" stroke-width="1.500"/>
<text class="tt" x="151" y="116" font-weight="bold" textLength="37" lengthAdjust="spacingAndGlyphs" style="fill:#4a4a4a">Quote</text>
<text class="tt" x="172" y="140" textLength="267" lengthAdjust="spacingAndGlyphs">Displays a quote grid. Once displayed, just start</text>
<text class="tt" x="172" y="156" textLength="236" lengthAdjust="spacingAndGlyphs">typing the symbols you want in the grid. A</text>
<text class="tt" x="172" y="172" textLength="279" lengthAdjust="spacingAndGlyphs">command line appears as you type. Press enter to</text>
<text class="tt" x="172" y="188" textLength="271" lengthAdjust="spacingAndGlyphs">display quote data for that instrument. Note that</text>
<text class="tt" x="172" y="204" textLength="241" lengthAdjust="spacingAndGlyphs">the fields you see are adjustable. Drag field</text>
<text class="tt" x="172" y="220" textLength="238" lengthAdjust="spacingAndGlyphs">headings to the desired location. Drag field</text>
<text class="tt" x="172" y="236" textLength="271" lengthAdjust="spacingAndGlyphs">headings off the grid to remove. Use the Manage</text>
<text class="tt" x="172" y="252" textLength="181" lengthAdjust="spacingAndGlyphs">Quote Fields dialog to add fields.</text>
<path d="M151 262.500H456" stroke="#a6bee4"/><path d="M151 263.500H456" stroke="#eef3fb"/>
<text class="tt" x="158" y="280" textLength="128" lengthAdjust="spacingAndGlyphs">Press F2 for more help.</text>
<!-- cursor -->
<path d="M146 87V104L150.200 100 153 106.500 155.500 105.300 153 99.300H158.500Z" fill="#fff" stroke="#000" stroke-width="1"/>

<!-- stamps -->
<g transform="translate(15.500 8)"><rect width="226.500" height="49" fill="#fff"/><rect x="1.500" y="1.500" width="223.500" height="46" fill="#fff" stroke="#000" stroke-width="1.500"/><use href="#cam"/>
<text class="st" x="128.500" y="15.500" font-size="14" fill="#111" text-anchor="middle" textLength="151" lengthAdjust="spacingAndGlyphs">Created with HyperSnap 7</text>
<text class="st" x="128.500" y="29.500" font-size="11" fill="#111" text-anchor="middle" textLength="174" lengthAdjust="spacingAndGlyphs">To avoid this stamp, buy a license at</text>
<text class="st" x="128.500" y="43" font-size="13" fill="#1a10e8" text-anchor="middle" textLength="159" lengthAdjust="spacingAndGlyphs">http://www.hyperionics.com</text></g>
<g transform="translate(686.500 409.500)"><rect width="226.500" height="49" fill="#fff"/><rect x="1.500" y="1.500" width="223.500" height="46" fill="#fff" stroke="#000" stroke-width="1.500"/><use href="#cam"/>
<text class="st" x="128.500" y="15.500" font-size="14" fill="#111" text-anchor="middle" textLength="151" lengthAdjust="spacingAndGlyphs">Created with HyperSnap 7</text>
<text class="st" x="128.500" y="29.500" font-size="11" fill="#111" text-anchor="middle" textLength="174" lengthAdjust="spacingAndGlyphs">To avoid this stamp, buy a license at</text>
<text class="st" x="128.500" y="43" font-size="13" fill="#1a10e8" text-anchor="middle" textLength="159" lengthAdjust="spacingAndGlyphs">http://www.hyperionics.com</text></g>
<g transform="translate(1358 811.500)"><rect width="226.500" height="49" fill="#fff"/><rect x="1.500" y="1.500" width="223.500" height="46" fill="#fff" stroke="#000" stroke-width="1.500"/><use href="#cam"/>
<text class="st" x="128.500" y="15.500" font-size="14" fill="#111" text-anchor="middle" textLength="151" lengthAdjust="spacingAndGlyphs">Created with HyperSnap 7</text>
<text class="st" x="128.500" y="29.500" font-size="11" fill="#111" text-anchor="middle" textLength="174" lengthAdjust="spacingAndGlyphs">To avoid this stamp, buy a license at</text>
<text class="st" x="128.500" y="43" font-size="13" fill="#1a10e8" text-anchor="middle" textLength="159" lengthAdjust="spacingAndGlyphs">http://www.hyperionics.com</text></g>
</svg>
</body></html>
